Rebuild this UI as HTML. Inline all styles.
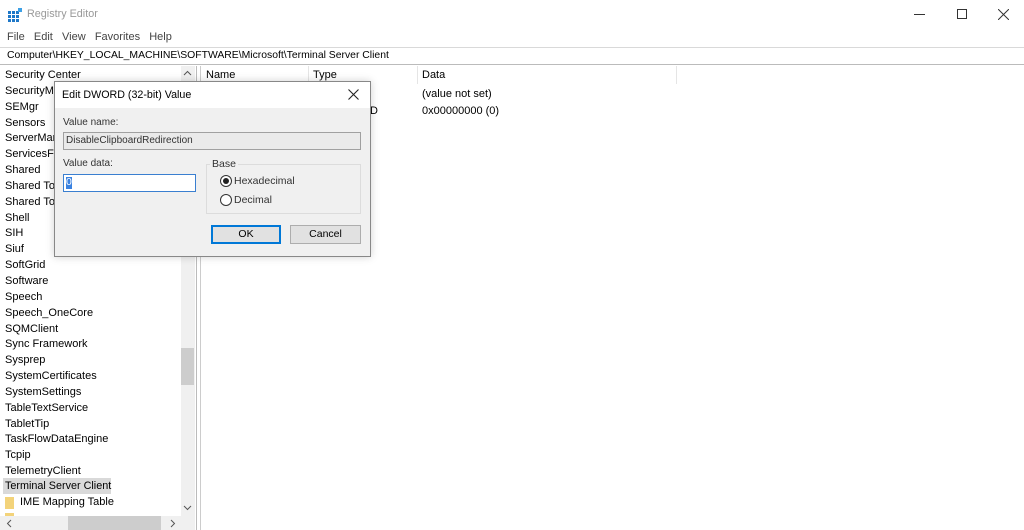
<!DOCTYPE html>
<html><head><meta charset="utf-8"><style>
*{box-sizing:border-box;margin:0;padding:0}
body{width:1024px;height:530px;overflow:hidden;background:#fff;font-family:"Liberation Sans",sans-serif;font-size:11px;color:#000;position:relative}
.a{position:absolute}
.t{position:absolute;white-space:nowrap}
</style></head><body>
<div class="a" style="left:0;top:0;width:1024px;height:30px;background:#fff"></div>
<svg class="a" style="left:8px;top:8px" width="14" height="14"><rect x="0" y="3" width="11" height="11" fill="#1e78c8"/><g stroke="#fff" stroke-width="1"><line x1="0" y1="6.5" x2="11" y2="6.5"/><line x1="0" y1="10.5" x2="11" y2="10.5"/><line x1="3.5" y1="3" x2="3.5" y2="14"/><line x1="7.5" y1="3" x2="7.5" y2="14"/></g><rect x="10" y="0" width="4" height="4" fill="#3ca0e6"/></svg>
<div class="t" style="left:27px;top:8px;font-size:10.8px;color:#999">Registry Editor</div>
<div class="a" style="left:914px;top:14px;width:11px;height:1px;background:#333"></div>
<div class="a" style="left:957px;top:9px;width:10px;height:10px;border:1px solid #333"></div>
<svg class="a" style="left:998px;top:9px" width="11" height="11"><path d="M0 0L11 11M11 0L0 11" stroke="#333" stroke-width="1"/></svg>
<div class="t" style="left:7px;top:31px;font-size:11px;color:#444">File&nbsp;&nbsp; Edit&nbsp;&nbsp; View&nbsp;&nbsp; Favorites&nbsp;&nbsp; Help</div>
<div class="a" style="left:0;top:47px;width:1024px;height:18px;border-top:1px solid #d9d9d9;border-bottom:1px solid #bbb"></div>
<div class="t" style="left:7px;top:50px;font-size:10.4px">Computer\HKEY_LOCAL_MACHINE\SOFTWARE\Microsoft\Terminal Server Client</div>
<div class="a" style="left:0;top:66px;width:181px;height:450px;line-height:15.85px;padding-top:2px;padding-left:5px;font-size:11px">
Security Center<br>SecurityMa<br>SEMgr<br>Sensors<br>ServerMan<br>ServicesFo<br>Shared<br>Shared Too<br>Shared Too<br>Shell<br>SIH<br>Siuf<br>SoftGrid<br>Software<br>Speech<br>Speech_OneCore<br>SQMClient<br>Sync Framework<br>Sysprep<br>SystemCertificates<br>SystemSettings<br>TableTextService<br>TabletTip<br>TaskFlowDataEngine<br>Tcpip<br>TelemetryClient</div>
<div class="a" style="left:3px;top:478px;width:108px;height:16px;background:#d9d9d9"></div>
<div class="t" style="left:5px;top:480px;font-size:10.8px">Terminal Server Client</div>
<div class="a" style="left:5px;top:497px;width:9px;height:12px;background:#f3d37a"></div>
<div class="t" style="left:20px;top:496px">IME Mapping Table</div>
<div class="a" style="left:5px;top:513px;width:9px;height:4px;background:#f3d37a"></div>
<div class="a" style="left:181px;top:66px;width:14px;height:450px;background:#f0f0f0"></div>
<svg class="a" style="left:183px;top:70px" width="9" height="6"><path d="M1 5L4.5 1.5L8 5" stroke="#555" fill="none"/></svg>
<div class="a" style="left:181px;top:348px;width:13px;height:37px;background:#cdcdcd"></div>
<svg class="a" style="left:183px;top:505px" width="9" height="6"><path d="M1 1L4.5 4.5L8 1" stroke="#555" fill="none"/></svg>
<div class="a" style="left:0;top:516px;width:195px;height:14px;background:#f0f0f0"></div>
<div class="a" style="left:68px;top:516px;width:93px;height:14px;background:#cdcdcd"></div>
<svg class="a" style="left:6px;top:519px" width="6" height="9"><path d="M5 1L1.5 4.5L5 8" stroke="#555" fill="none"/></svg>
<svg class="a" style="left:170px;top:519px" width="6" height="9"><path d="M1 1L4.5 4.5L1 8" stroke="#555" fill="none"/></svg>
<div class="a" style="left:196px;top:66px;width:1px;height:464px;background:#bbb"></div>
<div class="a" style="left:200px;top:66px;width:1px;height:464px;background:#ccc"></div>
<div class="t" style="left:206px;top:69px">Name</div>
<div class="a" style="left:308px;top:66px;width:1px;height:18px;background:#e5e5e5"></div>
<div class="t" style="left:313px;top:69px">Type</div>
<div class="a" style="left:417px;top:66px;width:1px;height:18px;background:#e5e5e5"></div>
<div class="t" style="left:422px;top:69px">Data</div>
<div class="a" style="left:676px;top:66px;width:1px;height:18px;background:#e5e5e5"></div>
<div class="t" style="left:422px;top:88px">(value not set)</div>
<div class="t" style="left:370px;top:105px">D</div>
<div class="t" style="left:422px;top:105px">0x00000000 (0)</div>
<div class="a" style="left:54px;top:81px;width:317px;height:176px;background:#f0f0f0;border:1px solid #888;box-shadow:0 0 8px rgba(0,0,0,.18)"></div>
<div class="a" style="left:55px;top:82px;width:315px;height:26px;background:#fff"></div>
<div class="t" style="left:62px;top:89px;font-size:10.7px">Edit DWORD (32-bit) Value</div>
<svg class="a" style="left:348px;top:89px" width="11" height="11"><path d="M0.5 0.5L10.5 10.5M10.5 0.5L0.5 10.5" stroke="#222" stroke-width="1.1"/></svg>
<div class="t" style="left:63px;top:117px;font-size:10px;color:#333">Value name:</div>
<div class="a" style="left:63px;top:132px;width:298px;height:18px;background:#eaeaea;border:1px solid #a0a0a0"></div>
<div class="t" style="left:66px;top:135px;font-size:10px;color:#333">DisableClipboardRedirection</div>
<div class="t" style="left:63px;top:158px;font-size:10px;color:#333">Value data:</div>
<div class="a" style="left:63px;top:174px;width:133px;height:18px;background:#fff;border:1px solid #3a7fd0"></div>
<div class="a" style="left:66px;top:177px;width:6px;height:12px;background:#3a82e0"></div>
<div class="t" style="left:66px;top:176px;font-size:10.5px;color:#fff">0</div>
<div class="a" style="left:206px;top:164px;width:155px;height:50px;border:1px solid #dcdcdc"></div>
<div class="t" style="left:210px;top:158px;font-size:10.5px;color:#333;background:#f0f0f0;padding:0 2px">Base</div>
<div class="a" style="left:220px;top:175px;width:12px;height:12px;border-radius:50%;border:1px solid #333;background:#fff"></div>
<div class="a" style="left:223px;top:178px;width:6px;height:6px;border-radius:50%;background:#222"></div>
<div class="t" style="left:234px;top:175px;font-size:10.5px;color:#333">Hexadecimal</div>
<div class="a" style="left:220px;top:194px;width:12px;height:12px;border-radius:50%;border:1px solid #333;background:#fff"></div>
<div class="t" style="left:234px;top:194px;font-size:10.5px;color:#333">Decimal</div>
<div class="a" style="left:211px;top:225px;width:70px;height:19px;background:#e1e1e1;border:1px solid #0078d7;box-shadow:inset 0 0 0 1px #0078d7"></div>
<div class="t" style="left:211px;top:228px;width:70px;text-align:center;font-size:10.5px">OK</div>
<div class="a" style="left:290px;top:225px;width:71px;height:19px;background:#e1e1e1;border:1px solid #adadad"></div>
<div class="t" style="left:290px;top:228px;width:71px;text-align:center;font-size:10.5px">Cancel</div>
</body></html>
